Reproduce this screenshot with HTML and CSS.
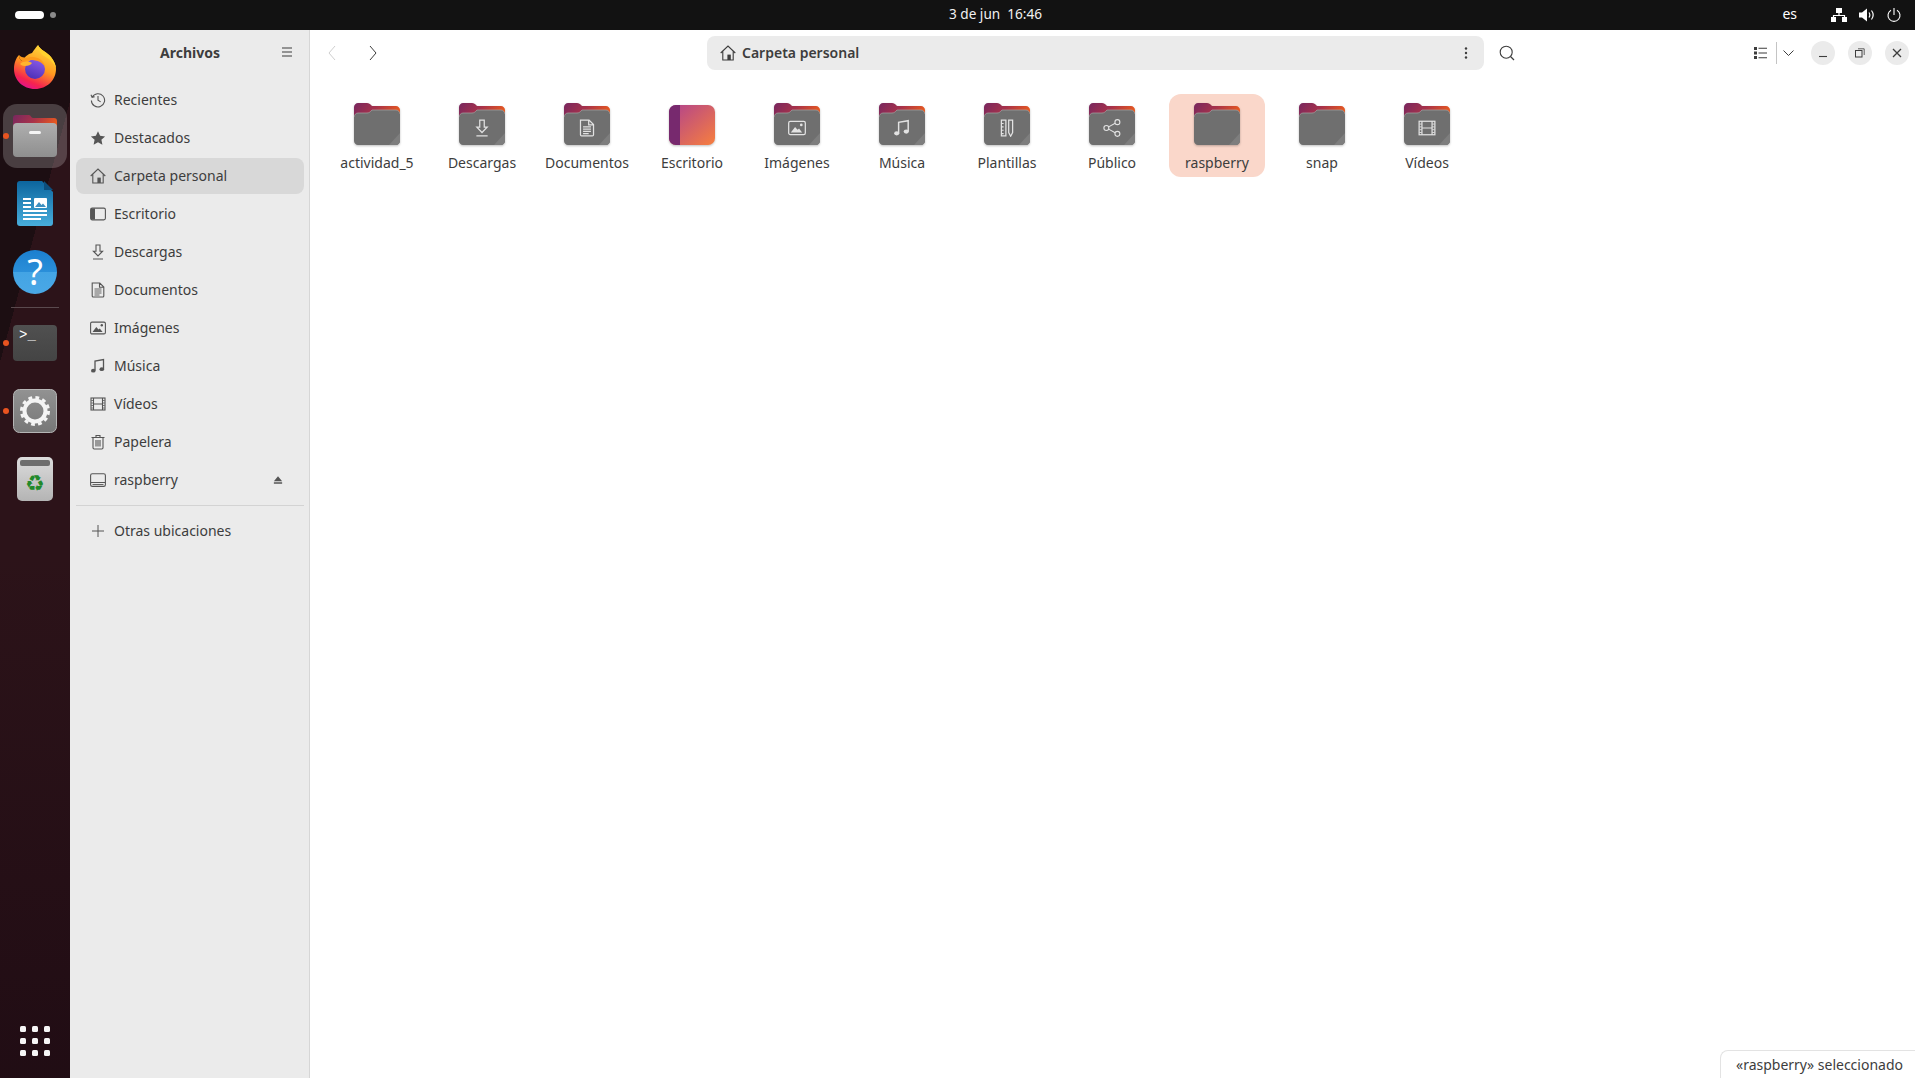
FILE: index.html
```html
<!DOCTYPE html>
<html lang="es">
<head>
  <meta charset="UTF-8">
  <title>Archivos</title>
  <link rel="stylesheet" href="styles.css">
</head>
<body>

  <!-- shared icons -->
  <svg class="sprite" xmlns="http://www.w3.org/2000/svg">
    <defs>
      <linearGradient id="folder-back" x1="0" y1="0" x2="1" y2="0.35">
        <stop offset="0" stop-color="#77275f"/>
        <stop offset="0.5" stop-color="#a8324a"/>
        <stop offset="1" stop-color="#ea5a1e"/>
      </linearGradient>
      <linearGradient id="desk" x1="0" y1="0" x2="1" y2="1">
        <stop offset="0" stop-color="#b0418f"/>
        <stop offset="1" stop-color="#f77f3e"/>
      </linearGradient>
      <linearGradient id="fox-body" x1="0.8" y1="0" x2="0.35" y2="1">
        <stop offset="0" stop-color="#ffe040"/>
        <stop offset="0.5" stop-color="#ff9a1f"/>
        <stop offset="0.85" stop-color="#f5234f"/>
        <stop offset="1" stop-color="#e3148a"/>
      </linearGradient>
      <linearGradient id="fox-globe" x1="0.7" y1="0" x2="0.3" y2="1">
        <stop offset="0" stop-color="#8a5be8"/>
        <stop offset="1" stop-color="#4c2fb5"/>
      </linearGradient>
      <linearGradient id="writer-body" x1="0" y1="0" x2="0" y2="1">
        <stop offset="0" stop-color="#0c659e"/>
        <stop offset="1" stop-color="#48aedc"/>
      </linearGradient>
      <linearGradient id="gear-body" x1="0" y1="0" x2="0" y2="1">
        <stop offset="0" stop-color="#929292"/>
        <stop offset="1" stop-color="#777"/>
      </linearGradient>
      <linearGradient id="files-front" x1="0" y1="0" x2="0" y2="1">
        <stop offset="0" stop-color="#aeaeae"/>
        <stop offset="1" stop-color="#8f8f8f"/>
      </linearGradient>
    </defs>

    <symbol id="folder" viewBox="0 0 46 42">
      <path d="M4 0h9c2 0 3 1 4 2l1 1h24c2 0 4 2 4 4v14H0V4c0-2 2-4 4-4z" fill="url(#folder-back)"/>
      <path d="M0 14c0-2 2-4 4-4h9c2 0 3-1 4-2l1-1h24c2 0 4 2 4 4v27c0 2-2 4-4 4H4c-2 0-4-2-4-4z" fill="#6f6f6f"/>
      <path d="M0 14c0-2 2-4 4-4h9c2 0 3-1 4-2l1-1h24c2 0 4 2 4 4" fill="none" stroke="#a5a5a5" stroke-width="0.7"/>
      <path d="M46 30v8c0 2-2 4-4 4h-7z" fill="#7e7e7e"/>
    </symbol>

    <symbol id="i-clock" viewBox="0 0 16 16">
      <path d="M2.2 5.2A6.6 6.6 0 1 1 1.4 8.4M1 2.8l1.1 2.6 2.6-.6M8 4v4.3l2.7 1.6" fill="none" stroke="currentColor" stroke-width="1.1"/>
    </symbol>
    <symbol id="i-star" viewBox="0 0 16 16">
      <path d="M8 1.2l2.1 4.6 5 .6-3.7 3.4 1 4.9L8 12.3l-4.4 2.4 1-4.9L.9 6.4l5-.6z" fill="currentColor"/>
    </symbol>
    <symbol id="i-home" viewBox="0 0 16 16">
      <path d="M.7 8L8 1l7.3 7M2.800 6.500V15h10.400V6.500" fill="none" stroke="currentColor" stroke-width="1.1"/>
      <rect x="7.400" y="9.600" width="3.400" height="5.400" fill="currentColor"/>
    </symbol>
    <symbol id="i-desk" viewBox="0 0 16 16">
      <rect x="0.600" y="2.100" width="14.800" height="11.800" rx="1.600" fill="none" stroke="currentColor" stroke-width="1.100"/>
      <path d="M1 2.500h4v11H1z" fill="currentColor"/>
    </symbol>
    <symbol id="i-down" viewBox="0 0 16 16">
      <path d="M6 1h4v6.200h2.600L8 12 3.400 7.200H6zM3 15h10" fill="none" stroke="currentColor" stroke-width="1.100"/>
    </symbol>
    <symbol id="i-doc" viewBox="0 0 16 16">
      <path d="M2.200 1h7.600l4 4v9c0 .6-.4 1-1 1H3.200c-.6 0-1-.4-1-1zM9.500 1v4.300h4.300" fill="none" stroke="currentColor" stroke-width="1.100"/>
      <path d="M4.500 7h7M4.500 9h7M4.500 11h7M4.500 13h5" fill="none" stroke="currentColor" stroke-width="0.900"/>
    </symbol>
    <symbol id="i-image" viewBox="0 0 16 16">
      <rect x="0.600" y="2.100" width="14.800" height="11.800" rx="1.400" fill="none" stroke="currentColor" stroke-width="1.100"/>
      <path d="M2.500 12l3.800-5 2.200 2.500 1.300-1 2.800 3.500z" fill="currentColor"/>
      <circle cx="11.800" cy="5.300" r="1.200" fill="currentColor"/>
    </symbol>
    <symbol id="i-music" viewBox="0 0 16 16">
      <path d="M5 12.500V3l8.500-1.500v9.500" fill="none" stroke="currentColor" stroke-width="1.300"/>
      <ellipse cx="3.300" cy="12.700" rx="2.300" ry="1.900" fill="currentColor"/>
      <ellipse cx="11.800" cy="11.200" rx="2.300" ry="1.900" fill="currentColor"/>
    </symbol>
    <symbol id="i-film" viewBox="0 0 16 16">
      <rect x="1" y="2" width="14" height="12" fill="none" stroke="currentColor" stroke-width="1.100"/>
      <path d="M3.500 2v12M12.500 2v12M3.500 8h9" fill="none" stroke="currentColor" stroke-width="1.100"/>
      <path d="M1.300 4.500h2M1.300 7h2M1.300 9.500h2M1.300 12h2M12.700 4.500h2M12.700 7h2M12.700 9.500h2M12.700 12h2" fill="none" stroke="currentColor" stroke-width="0.800"/>
    </symbol>
    <symbol id="i-trash" viewBox="0 0 16 16">
      <path d="M1.500 3.500h13M6 3.500V1.500h4v2M3 3.500v10.300c0 .7.500 1.200 1.200 1.200h7.600c.7 0 1.200-.5 1.200-1.200V3.500M6 6v6.500M8 6v6.500M10 6v6.500" fill="none" stroke="currentColor" stroke-width="1.100"/>
    </symbol>
    <symbol id="i-drive" viewBox="0 0 16 16">
      <path d="M.6 10.500V3.500c0-1 .7-1.700 1.700-1.700h11.400c1 0 1.700.7 1.700 1.700v7M.6 10.500h14.800v2.200c0 1-.7 1.700-1.700 1.700H2.300c-1 0-1.700-.7-1.700-1.700z" fill="none" stroke="currentColor" stroke-width="1.100"/>
      <path d="M2.500 12.500h11" fill="none" stroke="currentColor" stroke-width="0.900"/>
    </symbol>
    <symbol id="i-eject" viewBox="0 0 16 16">
      <path d="M8 3l5.500 6.500h-11zM2.500 11h11v2h-11z" fill="currentColor"/>
    </symbol>
    <symbol id="i-plus" viewBox="0 0 16 16">
      <path d="M8 2v12M2 8h12" fill="none" stroke="currentColor" stroke-width="1"/>
    </symbol>
    <symbol id="i-share" viewBox="0 0 16 16">
      <circle cx="3" cy="8" r="2.200" fill="none" stroke="currentColor" stroke-width="1"/>
      <circle cx="12.800" cy="2.800" r="2.200" fill="none" stroke="currentColor" stroke-width="1"/>
      <circle cx="12.800" cy="13.200" r="2.200" fill="none" stroke="currentColor" stroke-width="1"/>
      <path d="M5 7l5.800-3.200M5 9l5.800 3.200" fill="none" stroke="currentColor" stroke-width="1"/>
    </symbol>
    <symbol id="i-template" viewBox="0 0 16 16">
      <path d="M3 1h4v14H3zM9.500 1h3.500v11l-1.750 3.300L9.500 12z" fill="none" stroke="currentColor" stroke-width="1.100"/>
      <path d="M3 4h2M3 7h2M3 10h2M3 13h2" fill="none" stroke="currentColor" stroke-width="0.900"/>
    </symbol>
  </svg>

  <header class="topbar">
    <div class="workspaces">
      <span class="ws-pill"></span>
      <span class="ws-dot"></span>
    </div>
    <div class="clock">3 de jun&nbsp;&nbsp;16:46</div>
    <div class="tray">
      <span class="tray-lang">es</span>
      <svg class="tray-net" width="16" height="14" viewBox="0 0 16 14"><path d="M5 0h6v5H5zM0 9h5v5H0zM11 9h5v5h-5z" fill="#fff"/><path d="M8 5v2.500M2.500 9V7.500h11V9" fill="none" stroke="#fff" stroke-width="1.200"/></svg>
      <svg class="tray-vol" width="16" height="14" viewBox="0 0 16 14"><path d="M0 4.500h3L8 .5v13l-5-4H0z" fill="#fff"/><path d="M10 4.500c1 1.500 1 3.500 0 5M12.500 2.500c2 2.700 2 6.300 0 9" fill="none" stroke="#fff" stroke-width="1.200"/></svg>
      <svg class="tray-power" width="14" height="14" viewBox="0 0 14 14"><path d="M4 2.200a6 6 0 1 0 6 0M7 0v7" fill="none" stroke="#fff" stroke-width="1.100"/></svg>
    </div>
  </header>

  <div class="desktop">

    <nav class="dock">
      <div class="dock-item">
        <svg class="fox-icon" width="42" height="44" viewBox="0 0 42 44">
          <path d="M21 44C9 44 0 35 0 24c0-6 2-11 5-14 0 3 1 5 3 6 2-4 6-7 10-8 2-3 4-6 6-8 2 5 9 7 13 12 3 4 5 8 5 12 0 11-9 20-21 20z" fill="url(#fox-body)"/>
          <path d="M24 0c2 5 9 7 13 12 3 4 5 8 5 12-2-6-6-10-12-13-3-2-6-6-6-11z" fill="#ffd22e"/>
          <circle cx="21" cy="24" r="10" fill="url(#fox-globe)"/>
          <path d="M5 10c0 3 1 5 3 6 4-1 12-2 18 1 2 1 4 3 5 5-1-6-6-10-13-10-2 0-4 .500-5 1.500-2-1-6-1-8-3.500z" fill="#ff9a1c"/>
          <path d="M6 19c3-3 8-3 12-1-1 2-4 3-7 3-2 0-4-1-5-2z" fill="#ffb52e"/>
        </svg>
      </div>
      <div class="dock-item is-active">
        <span class="run-dot"></span>
        <svg width="44" height="42" viewBox="0 0 44 42">
          <path d="M3 0h13c2 0 2 3 4 3h21c2 0 3 1 3 3v14H0V3c0-2 1-3 3-3z" fill="url(#folder-back)"/>
          <rect y="8" width="44" height="34" rx="4" fill="url(#files-front)"/>
          <rect x="16" y="16" width="12" height="3" rx="1.500" fill="#f4f4f4"/>
        </svg>
      </div>
      <div class="dock-item">
        <svg width="36" height="46" viewBox="0 0 36 46">
          <path d="M3 0h22l11 11v31c0 2-1 3-3 3H3c-2 0-3-1-3-3V3c0-2 1-3 3-3z" fill="url(#writer-body)"/>
          <path d="M27 0l9 9h-9z" fill="#0d4f7d"/>
          <path d="M6 18h8M6 22h8M6 26h8M6 30h24M6 34h24M6 38h18" stroke="#fff" stroke-width="2" fill="none"/>
          <rect x="17" y="17" width="13" height="10" rx="1" fill="#fff"/>
          <path d="M18 26l4-5 2.500 3 1.500-1.500 3 3.500z" fill="#3c8fc0"/>
        </svg>
      </div>
      <div class="dock-item">
        <div class="help-icon">?</div>
      </div>
      <hr class="dock-sep">
      <div class="dock-item">
        <span class="run-dot"></span>
        <div class="term-icon">&gt;_</div>
      </div>
      <div class="dock-item">
        <span class="run-dot"></span>
        <svg width="44" height="44" viewBox="0 0 44 44">
          <rect x="0.500" y="0.500" width="43" height="43" rx="6" fill="url(#gear-body)" stroke="#b5b5b5"/>
          <circle cx="22" cy="22" r="10.500" fill="none" stroke="#f4f4f4" stroke-width="4"/>
          <circle cx="22" cy="22" r="13.500" fill="none" stroke="#f4f4f4" stroke-width="3" stroke-dasharray="3.800 3.270"/>
        </svg>
      </div>
      <div class="dock-item">
        <div class="bin-icon">
          <span class="bin-bar"></span>
          <span class="bin-mark">♻</span>
        </div>
      </div>
      <div class="dock-item dock-apps">
        <div class="apps-grid">
          <span></span><span></span><span></span>
          <span></span><span></span><span></span>
          <span></span><span></span><span></span>
        </div>
      </div>
    </nav>

    <aside class="sidebar">
      <div class="sidebar-head">
        <span class="sidebar-title">Archivos</span>
        <svg class="sidebar-menu" width="12" height="10" viewBox="0 0 12 10"><path d="M1 1h10M1 5h10M1 9h10" stroke="#3d3d3d" stroke-width="1.100" fill="none"/></svg>
      </div>
      <ul class="places">
        <li class="place"><svg class="place-icon"><use href="#i-clock"/></svg>Recientes</li>
        <li class="place"><svg class="place-icon"><use href="#i-star"/></svg>Destacados</li>
        <li class="place is-current"><svg class="place-icon"><use href="#i-home"/></svg>Carpeta personal</li>
        <li class="place"><svg class="place-icon"><use href="#i-desk"/></svg>Escritorio</li>
        <li class="place"><svg class="place-icon"><use href="#i-down"/></svg>Descargas</li>
        <li class="place"><svg class="place-icon"><use href="#i-doc"/></svg>Documentos</li>
        <li class="place"><svg class="place-icon"><use href="#i-image"/></svg>Imágenes</li>
        <li class="place"><svg class="place-icon"><use href="#i-music"/></svg>Música</li>
        <li class="place"><svg class="place-icon"><use href="#i-film"/></svg>Vídeos</li>
        <li class="place"><svg class="place-icon"><use href="#i-trash"/></svg>Papelera</li>
        <li class="place"><svg class="place-icon"><use href="#i-drive"/></svg>raspberry<svg class="eject-icon"><use href="#i-eject"/></svg></li>
      </ul>
      <hr class="sidebar-sep">
      <ul class="places">
        <li class="place"><svg class="place-icon"><use href="#i-plus"/></svg>Otras ubicaciones</li>
      </ul>
    </aside>

    <main class="files">
      <div class="toolbar">
        <button class="tool-btn is-off"><svg width="8" height="16" viewBox="0 0 8 16"><path d="M7 1L1 8l6 7" fill="none" stroke="currentColor" stroke-width="1"/></svg></button>
        <button class="tool-btn"><svg width="8" height="16" viewBox="0 0 8 16"><path d="M1 1l6 7-6 7" fill="none" stroke="currentColor" stroke-width="1"/></svg></button>
        <div class="pathbar">
          <svg class="path-home"><use href="#i-home"/></svg>
          <span class="path-label">Carpeta personal</span>
          <svg class="path-menu" width="4" height="12" viewBox="0 0 4 12"><circle cx="2" cy="1.500" r="1.200" fill="#3d3d3d"/><circle cx="2" cy="6" r="1.200" fill="#3d3d3d"/><circle cx="2" cy="10.500" r="1.200" fill="#3d3d3d"/></svg>
        </div>
        <button class="tool-btn search-btn"><svg width="16" height="16" viewBox="0 0 16 16"><circle cx="7.200" cy="7.200" r="6" fill="none" stroke="currentColor" stroke-width="1.100"/><path d="M11.500 11.500l3.500 3.500" stroke="currentColor" stroke-width="1.300"/></svg></button>
        <div class="view-switch">
          <svg width="13" height="12" viewBox="0 0 13 12"><path d="M0 0h3v3H0zM0 4.500h3v3H0zM0 9h3v3H0z" fill="#3d3d3d"/><path d="M4.500 1.200H13M4.500 6H13M4.500 10.800H13" stroke="#3d3d3d" stroke-width="1.100"/></svg>
          <span class="view-sep"></span>
          <svg width="11" height="6" viewBox="0 0 11 6"><path d="M.5.500l5 5 5-5" fill="none" stroke="#3d3d3d" stroke-width="1"/></svg>
        </div>
        <div class="win-btns">
          <button class="win-btn"><svg width="10" height="10" viewBox="0 0 10 10"><path d="M1 8.500h8" stroke="#3d3d3d" stroke-width="1.100"/></svg></button>
          <button class="win-btn"><svg width="10" height="10" viewBox="0 0 10 10"><rect x="0.500" y="2.500" width="6.500" height="6.500" fill="none" stroke="#3d3d3d"/><path d="M3 .800h6.200V7" fill="none" stroke="#3d3d3d" stroke-width="0.800"/></svg></button>
          <button class="win-btn"><svg width="10" height="10" viewBox="0 0 10 10"><path d="M1 1l8 8M9 1l-8 8" stroke="#3d3d3d" stroke-width="1.300"/></svg></button>
        </div>
      </div>

      <div class="grid">
        <div class="file"><svg class="folder"><use href="#folder"/></svg><span class="file-name">actividad_5</span></div>
        <div class="file"><span class="folder-wrap"><svg class="folder"><use href="#folder"/></svg><svg class="folder-glyph"><use href="#i-down"/></svg></span><span class="file-name">Descargas</span></div>
        <div class="file"><span class="folder-wrap"><svg class="folder"><use href="#folder"/></svg><svg class="folder-glyph"><use href="#i-doc"/></svg></span><span class="file-name">Documentos</span></div>
        <div class="file">
          <svg class="desk-folder" viewBox="0 0 46 40"><rect width="46" height="40" rx="7" fill="url(#desk)"/><path d="M7 0h4v40H7c-4 0-7-3-7-7V7c0-4 3-7 7-7z" fill="#77296e"/></svg>
          <span class="file-name">Escritorio</span>
        </div>
        <div class="file"><span class="folder-wrap"><svg class="folder"><use href="#folder"/></svg><svg class="folder-glyph"><use href="#i-image"/></svg></span><span class="file-name">Imágenes</span></div>
        <div class="file"><span class="folder-wrap"><svg class="folder"><use href="#folder"/></svg><svg class="folder-glyph"><use href="#i-music"/></svg></span><span class="file-name">Música</span></div>
        <div class="file"><span class="folder-wrap"><svg class="folder"><use href="#folder"/></svg><svg class="folder-glyph"><use href="#i-template"/></svg></span><span class="file-name">Plantillas</span></div>
        <div class="file"><span class="folder-wrap"><svg class="folder"><use href="#folder"/></svg><svg class="folder-glyph"><use href="#i-share"/></svg></span><span class="file-name">Público</span></div>
        <div class="file is-selected"><svg class="folder"><use href="#folder"/></svg><span class="file-name">raspberry</span></div>
        <div class="file"><svg class="folder"><use href="#folder"/></svg><span class="file-name">snap</span></div>
        <div class="file"><span class="folder-wrap"><svg class="folder"><use href="#folder"/></svg><svg class="folder-glyph"><use href="#i-film"/></svg></span><span class="file-name">Vídeos</span></div>
      </div>

      <div class="status">«raspberry» seleccionado</div>
    </main>
  </div>

</body>
</html>
```

FILE: styles.css
```css
/* Global Reset */
* {
  margin: 0;
  padding: 0;
  box-sizing: border-box;
}

body {
  font-family: 'Noto Sans', 'Open Sans', sans-serif;
  font-size: 14px;
  color: #3d3d3d;
  height: 100vh;
  display: flex;
  flex-direction: column;
  overflow: hidden;
  background-color: #fff;
}

.sprite {
  position: absolute;
  width: 0;
  height: 0;
}

/* Top Bar */
.topbar {
  height: 30px;
  flex-shrink: 0;
  background-color: #121212;
  color: #fff;
  display: grid;
  grid-template-columns: 949px auto 1fr;
  align-items: center;
}

.workspaces {
  display: flex;
  align-items: center;
  gap: 6px;
  padding-left: 15px;
}

.ws-pill {
  width: 29px;
  height: 8px;
  border-radius: 4px;
  background-color: #fff;
}

.ws-dot {
  width: 6px;
  height: 6px;
  border-radius: 50%;
  background-color: #8a8a8a;
}

.clock {
  font-size: 13.6px;
  color: #f0f0f0;
  padding-bottom: 4px;
}

.tray {
  display: flex;
  align-items: center;
  justify-content: flex-end;
  padding-right: 14px;
}

.tray-lang {
  margin-right: 34px;
  padding-bottom: 3px;
}

.tray-net {
  margin-right: 12px;
}

.tray-vol {
  margin-right: 12px;
}

/* Dock */
.desktop {
  flex-grow: 1;
  display: flex;
  min-height: 0;
}

.dock {
  width: 70px;
  flex-shrink: 0;
  display: flex;
  flex-direction: column;
  align-items: center;
  gap: 4px;
  padding: 6px 0 5px;
  background:
    linear-gradient(rgba(28, 10, 18, 0) 50%, rgba(28, 10, 18, 0.7) 100%),
    linear-gradient(105deg, #1c0e12 86px, #2c1319 86px);
}

.dock-item {
  position: relative;
  width: 64px;
  height: 64px;
  flex-shrink: 0;
  display: flex;
  align-items: center;
  justify-content: center;
  border-radius: 14px;
}

.dock-item.is-active {
  background-color: rgba(255, 255, 255, 0.2);
}

.dock-apps {
  margin-top: auto;
}

.fox-icon {
  margin-bottom: 3px;
}

.run-dot {
  position: absolute;
  left: 0;
  top: 29px;
  width: 6px;
  height: 6px;
  border-radius: 50%;
  background-color: #e95420;
}

.dock-sep {
  width: 48px;
  height: 1px;
  flex-shrink: 0;
  border: 0;
  background-color: #5a4a4e;
  margin: -1px 0;
}

.help-icon {
  width: 44px;
  height: 44px;
  border-radius: 50%;
  background: linear-gradient(#1c7fcf, #2a8fd9 50%, #43a4e4 50%, #4aa8e6);
  color: #fff;
  font-size: 36px;
  line-height: 44px;
  text-align: center;
}

.term-icon {
  width: 44px;
  height: 36px;
  border-radius: 4px;
  background: linear-gradient(#505050, #444);
  color: #fff;
  font-family: 'Liberation Mono', monospace;
  font-size: 14px;
  line-height: 14px;
  padding: 3px 0 0 6px;
}

.bin-icon {
  width: 36px;
  height: 44px;
  border-radius: 5px;
  background: linear-gradient(#dcdcdc, #b4b4b4);
  display: flex;
  flex-direction: column;
  align-items: center;
  padding-top: 3px;
}

.bin-bar {
  width: 30px;
  height: 6px;
  border-radius: 2px;
  background-color: #6e6e6e;
}

.bin-mark {
  font-family: 'DejaVu Sans', sans-serif;
  font-size: 22px;
  line-height: 30px;
  margin-top: 3px;
  color: #21892a;
}

.apps-grid {
  display: grid;
  grid-template-columns: repeat(3, 6px);
  gap: 6px;
}

.apps-grid span {
  width: 6px;
  height: 6px;
  border-radius: 1.5px;
  background-color: #f6f6f6;
}

/* Sidebar */
.sidebar {
  width: 240px;
  flex-shrink: 0;
  background-color: #ebebeb;
  border-right: 1px solid #d6d6d6;
  padding: 0 5px 0 6px;
}

.sidebar-head {
  position: relative;
  height: 52px;
  display: flex;
  align-items: center;
  justify-content: center;
  padding-bottom: 8px;
}

.sidebar-title {
  font-weight: 700;
}

.sidebar-menu {
  position: absolute;
  right: 11px;
  top: 17px;
}

.places {
  list-style: none;
}

.place {
  height: 36px;
  margin-bottom: 2px;
  padding: 0 14px 2px;
  display: flex;
  align-items: center;
  gap: 8px;
  border-radius: 8px;
}

.place.is-current {
  background-color: #d8d8d8;
}

.place-icon {
  width: 16px;
  height: 16px;
  margin-top: 2px;
  color: #555;
  flex-shrink: 0;
}

.eject-icon {
  width: 12px;
  height: 12px;
  margin-top: 2px;
  margin-left: auto;
  margin-right: 6px;
  color: #555;
}

.sidebar-sep {
  height: 1px;
  border: 0;
  background-color: #d3d3d3;
  margin: 7px 0;
}

/* Main Pane */
.files {
  position: relative;
  flex-grow: 1;
  min-width: 0;
  display: flex;
  flex-direction: column;
}

.toolbar {
  height: 46px;
  flex-shrink: 0;
  display: flex;
  align-items: center;
  padding: 0 6px 0 5px;
}

.tool-btn {
  width: 34px;
  height: 34px;
  border: 0;
  background: none;
  color: #3d3d3d;
  display: flex;
  align-items: center;
  justify-content: center;
}

.tool-btn + .tool-btn {
  margin-left: 7px;
}

.tool-btn.is-off {
  color: #cfcfcf;
}

.pathbar {
  width: 777px;
  height: 34px;
  margin-left: 317px;
  padding: 0 16px 0 13px;
  border-radius: 8px;
  background-color: #ebebeb;
  display: flex;
  align-items: center;
  gap: 6px;
}

.path-home {
  width: 16px;
  height: 16px;
}

.path-label {
  font-weight: 600;
  padding-bottom: 2px;
}

.path-menu {
  margin-left: auto;
}

.tool-btn.search-btn {
  margin-left: 6px;
}

.view-switch {
  margin-left: auto;
  display: flex;
  align-items: center;
  margin-right: 17px;
}

.view-sep {
  width: 1px;
  height: 22px;
  background-color: #c4c4c4;
  margin: 0 6px 0 9px;
}

.win-btns {
  display: flex;
  gap: 13px;
}

.win-btn {
  width: 24px;
  height: 24px;
  border: 0;
  border-radius: 50%;
  background-color: #ebebeb;
  display: flex;
  align-items: center;
  justify-content: center;
}

/* File Grid */
.grid {
  display: flex;
  gap: 9px;
  padding: 18px 0 0 19px;
}

.file {
  width: 96px;
  height: 83px;
  padding-top: 9px;
  display: flex;
  flex-direction: column;
  align-items: center;
  border-radius: 12px;
}

.file.is-selected {
  background-color: #fad7ca;
}

.folder {
  width: 46px;
  height: 42px;
  display: block;
  filter: drop-shadow(0 1px 1px rgba(0, 0, 0, 0.25));
}

.desk-folder {
  width: 46px;
  height: 40px;
  margin-top: 2px;
  display: block;
  filter: drop-shadow(0 1px 1px rgba(0, 0, 0, 0.25));
}

.folder-wrap {
  position: relative;
  display: block;
  width: 46px;
  height: 42px;
}

.folder-glyph {
  position: absolute;
  left: 14px;
  top: 16px;
  width: 18px;
  height: 18px;
  color: #e2e2e2;
}

.file-name {
  margin-top: 8px;
  line-height: 19px;
  white-space: nowrap;
}

/* Status Floating Bar */
.status {
  position: absolute;
  right: 0;
  bottom: 0;
  width: 195px;
  height: 28px;
  padding: 4px 0 0 15px;
  background-color: #fff;
  border-top: 1px solid #e3e3e3;
  border-left: 1px solid #e3e3e3;
  border-top-left-radius: 8px;
  white-space: nowrap;
}
```
